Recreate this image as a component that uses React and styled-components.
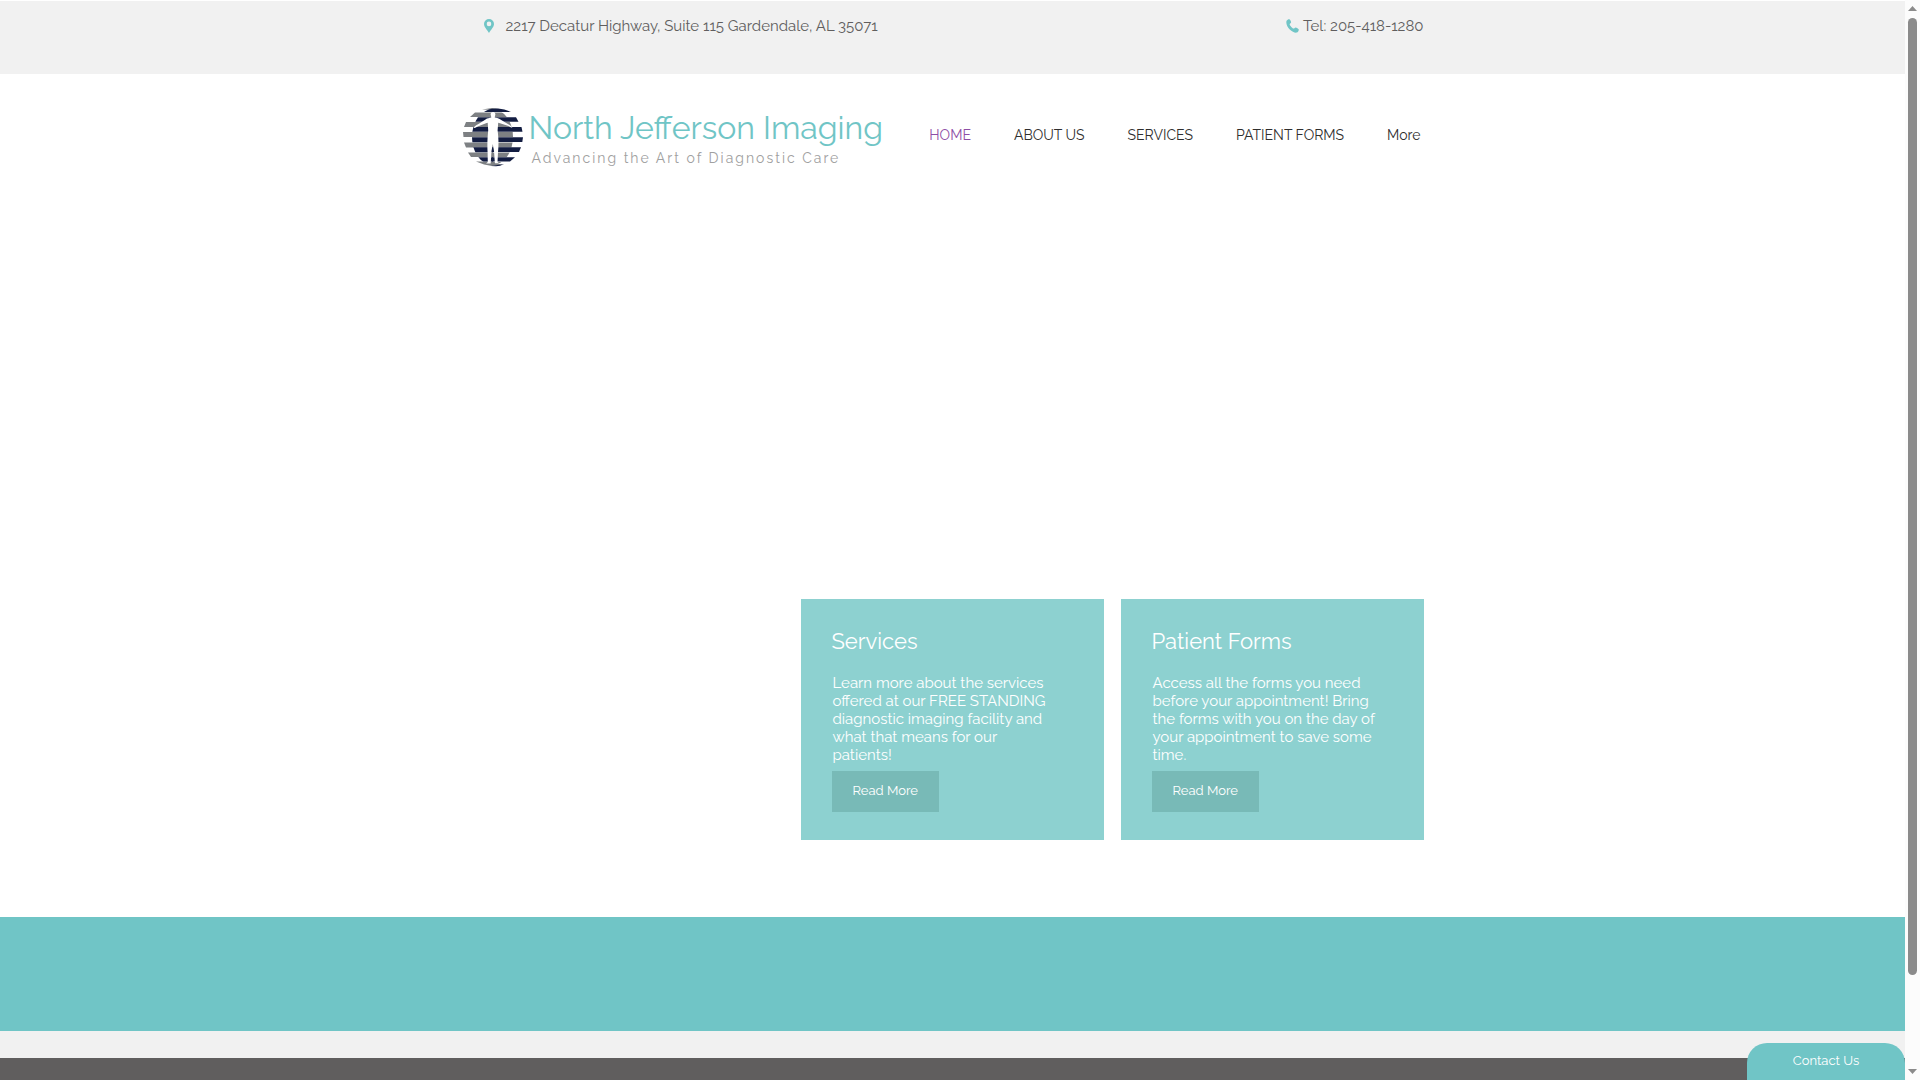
import styled, { createGlobalStyle } from "styled-components";

const navItems = ["HOME", "ABOUT US", "SERVICES", "PATIENT FORMS", "More"];

const cards = [
  {
    title: "Services",
    text: "Learn more about the services offered at our FREE STANDING diagnostic imaging facility and what that means for our patients!",
  },
  {
    title: "Patient Forms",
    text: "Access all the forms you need before your appointment! Bring the forms with you on the day of your appointment to save some time.",
  },
];

const PinIcon = () => (
  <svg width="10" height="14" viewBox="0 0 10 14" aria-hidden="true">
    <path
      fill="#70c5c6"
      fillRule="evenodd"
      d="M5 0a5 5 0 0 1 5 5c0 3-3 5.500-5 9C3 10.500 0 8 0 5a5 5 0 0 1 5-5zm0 2.600a2.300 2.300 0 1 0 0 4.600 2.300 2.300 0 0 0 0-4.600z"
    />
  </svg>
);

const PhoneIcon = () => (
  <svg width="13" height="14" viewBox="0 0 13 14" aria-hidden="true">
    <path
      fill="#70c5c6"
      d="M.6 1.700C1.200.7 2.400 0 3.400.2c.8.2 1.700 2.100 1.700 3 0 .8-1.200 1.200-1.400 1.900-.2 1 2.700 4.300 3.900 4.400.8.1 1.200-1.100 2-1.100.9 0 3 1.300 3.200 2.100.2 1-.9 2.700-2 3.100C7 14.700-1.300 7.200.6 1.700z"
    />
  </svg>
);

// Striped globe: grey bars run out to the left, navy bars to the right,
// and they interlock inside the core ellipse
const LogoIcon = () => (
  <svg width="61" height="60" viewBox="0 0 61 60" aria-hidden="true">
    <defs>
      <clipPath id="core">
        <ellipse cx="30.500" cy="30" rx="20.500" ry="28" />
      </clipPath>
    </defs>
    <g fill="#7d8083">
      <path d="M20 2.500 30 1l6 1-9 .8z" />
      <path d="M13 5.500h18V10H8z" />
      <path d="M4 15h27v5H2z" />
      <path d="M1 25h30v5H1.500z" />
      <path d="M2 35.500h29v5H4z" />
      <path d="M6 45.500h25V50H9z" />
      <path d="M14 54.500h17L40 58l-10 1-8-1.500z" />
      <g clipPath="url(#core)">
        <path d="M30 5.500h31V10H30zM30 15h31v5H30zM30 25h31v5H30zM30 35.500h31v5H30zM30 45.500h31V50H30zM30 55h31v3H30z" />
      </g>
    </g>
    <g fill="#131d42">
      <path d="M22 5c4-3 9-4 14-3.500 5 .4 9 1.500 13 3.500z" />
      <path d="M30 10.300h24l2.500 4.400H30z" />
      <path d="M30 20h29.500l1 4.700H30z" />
      <path d="M30 30.300h31l-.7 4.800H30z" />
      <path d="M30 40.300h29l-2 4.800H30z" />
      <path d="M30 50.300h23l-5 4.200H30z" />
      <g clipPath="url(#core)">
        <path d="M0 10.300h31v4.500H0zM0 20h31v4.800H0zM0 30.300h31v4.900H0zM0 40.300h31v4.900H0zM0 50.300h31v4.200H0z" />
      </g>
      <path d="m29 59 13-2-4 1.700-4 .5z" />
    </g>
    <path
      fill="#fff"
      d="M31 5c1.900 0 2.600 1.400 2.300 3.100-.2 1-.6 1.500-.5 2.400 1.600.5 3.600.5 4.800 1.600l7.400 4.400 3 1.700 2.500 2.300-1.400.1-2.600-1.500-8.500-2.800-1.800-.5-.6 7.700c1.200 8.500 1 15.500.4 22l-.5 9.500 1.600 1.300h-4.200L32 44l-1.200-7L29.500 44l-.8 12.500h-4.600l1.700-1.400-.2-9.600c-.4-6.500-.3-13.500.6-22l-.5-7.700-1.700.5-7.700 2.900-3.500 1.700-1.300-.3 2.700-2.400 2.700-1.500 7-4.400c1.200-1.100 3.500-1.300 5.300-1.800.1-.9-.3-1.400-.5-2.400C28.400 6.400 29.100 5 31 5z"
    />
  </svg>
);

const App = () => {
  return (
    <Window>
      <GlobalStyle />
      <Page>
        <TopBar>
          <Content>
            <Contact>
              <PinIcon />
              <Address>2217 Decatur Highway, Suite 115 Gardendale, AL 35071</Address>
            </Contact>
            <Contact>
              <PhoneIcon />
              <span>Tel: 205-418-1280</span>
            </Contact>
          </Content>
        </TopBar>

        <Header>
          <Brand href="#">
            <LogoIcon />
            <BrandText>
              <BrandName>North Jefferson Imaging</BrandName>
              <Tagline>Advancing the Art of Diagnostic Care</Tagline>
            </BrandText>
          </Brand>
          <Nav>
            {navItems.map((item, index) => (
              <NavLink key={item} href="#" $active={index === 0}>
                {item}
              </NavLink>
            ))}
          </Nav>
        </Header>

        <Main>
          {cards.map((card) => (
            <Card key={card.title}>
              <CardTitle>{card.title}</CardTitle>
              <CardText>{card.text}</CardText>
              <ReadMore href="#">Read More</ReadMore>
            </Card>
          ))}
        </Main>

        <Band />
        <Footer />
        <ContactButton type="button">Contact Us</ContactButton>
      </Page>

      <Scrollbar aria-hidden="true">
        <Arrow viewBox="0 0 9 5">
          <path fill="#8b8b8b" d="M4.500 0 9 5H0z" />
        </Arrow>
        <Thumb />
        <Arrow viewBox="0 0 9 5">
          <path fill="#8b8b8b" d="M0 0h9L4.500 5z" />
        </Arrow>
      </Scrollbar>
    </Window>
  );
};

const GlobalStyle = createGlobalStyle`
  * {
    box-sizing: border-box;
  }

  body {
    margin: 0;
    background: #fff;
    font-family: Raleway, Lato, "Liberation Sans", sans-serif;
  }
`;

const Window = styled.div`
  display: flex;
  min-height: 100vh;
`;

const Page = styled.div`
  position: relative;
  display: flex;
  flex: 1;
  flex-direction: column;
`;

const TopBar = styled.div`
  min-height: 74px;
  padding-top: 15px;
  border-top: 1px solid #fff;
  background: #f1f1f1;
`;

const Content = styled.div`
  display: flex;
  justify-content: space-between;
  width: 100%;
  max-width: 942px;
  margin: 0 auto;
  padding-left: 2px;
`;

const Contact = styled.div`
  display: flex;
  align-items: center;
  gap: 4px;
  font-size: 15px;
  line-height: 20px;
  color: #605e5e;
`;

const Address = styled.span`
  margin-left: 8px;
`;

const Header = styled.header`
  display: flex;
  justify-content: space-between;
  width: 100%;
  max-width: 982px;
  margin: 0 auto;
  padding: 33px 23px 0 0;
`;

const Brand = styled.a`
  display: flex;
  gap: 6px;
  text-decoration: none;
`;

const BrandText = styled.div`
  display: flex;
  flex-direction: column;
`;

const BrandName = styled.span`
  font-size: 32px;
  line-height: 42px;
  color: #70c5c6;
`;

const Tagline = styled.span`
  padding-left: 3px;
  font-size: 14px;
  line-height: 18px;
  letter-spacing: 2px;
  color: #a0a0a0;
`;

const Nav = styled.nav`
  display: flex;
  gap: 43px;
  padding-top: 18px;
`;

const NavLink = styled.a`
  font-size: 14px;
  line-height: 20px;
  color: ${({ $active }) => ($active ? "#8e4ea6" : "#2f2e2e")};
  text-decoration: none;
`;

const Main = styled.main`
  display: flex;
  justify-content: flex-end;
  gap: 17px;
  width: 100%;
  max-width: 980px;
  margin: 0 auto;
  padding: 432px 19px 77px 0;
`;

const Card = styled.section`
  width: 303px;
  padding: 27px 31px 28px;
  background: #8dd1d0;
  color: #fff;
`;

const CardTitle = styled.h2`
  margin: 0;
  font-size: 22px;
  font-weight: 400;
  line-height: 30px;
`;

const CardText = styled.p`
  width: 226px;
  margin: 18px 0 7px;
  padding-left: 1px;
  font-size: 15px;
  line-height: 18px;
`;

const ReadMore = styled.a`
  display: block;
  width: 107px;
  padding: 0 0 2px 21px;
  background: #78bab7;
  font-size: 13px;
  line-height: 39px;
  color: #fff;
  text-decoration: none;
`;

const Band = styled.div`
  height: 114px;
  background: #70c5c6;
`;

const Footer = styled.footer`
  flex: 1;
  min-height: 49px;
  border-top: 27px solid #f1f1f1;
  background: #605e5e;
`;

const ContactButton = styled.button`
  position: absolute;
  right: 0;
  bottom: 0;
  width: 158px;
  height: 37px;
  padding: 0 0 2px;
  border: none;
  border-radius: 20px 20px 0 0;
  background: #70c5c6;
  font-family: inherit;
  font-size: 13px;
  color: #fff;
  cursor: pointer;
`;

const Scrollbar = styled.div`
  display: flex;
  flex-direction: column;
  align-items: center;
  width: 15px;
  padding: 6px 0;
  background: #fcfcfc;
`;

const Arrow = styled.svg`
  width: 9px;
  height: 5px;
`;

const Thumb = styled.div`
  flex: 1;
  width: 9px;
  margin: 7px 0 94px;
  border-radius: 5px;
  background: #8b8b8b;
`;

export default App;
